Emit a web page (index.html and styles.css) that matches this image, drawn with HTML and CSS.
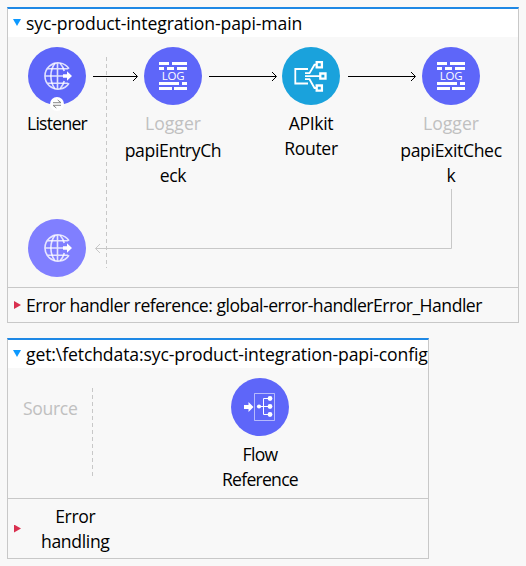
FILE: index.html
```
<!DOCTYPE html>
<html lang="en">
<head>
<meta charset="utf-8">
<title>syc-product-integration-papi</title>
<link rel="stylesheet" href="styles.css">
</head>
<body>
<svg width="0" height="0" class="defs">
  <defs>
    <symbol id="globe" viewBox="0 0 58 58">
      <g fill="none" stroke="#fff" stroke-opacity=".8" stroke-width="1.6">
        <path d="M41 21.8A13.1 13.1 0 1 0 41 36.2M29.5 15.7v26.6M19 21.8h21M19 36.2h21M16.2 29H35"/>
        <path d="M27 16.2c-5.5 7-5.5 18.6 0 25.6M32 16.2c2.3 2.5 3.7 5 4.2 7.8M32 41.8c2.3-2.5 3.7-5 4.2-7.8"/>
      </g>
      <path fill="#fff" d="M35 27.200h4v-3l5 4.800-5 4.800v-3h-4z"/>
    </symbol>
    <symbol id="log" viewBox="0 0 58 58">
      <path fill="#fff" d="M15 15h10v3H15zM28 15h15v3H28zM15 20h5v3h-5zM23 20h7v3h-7zM33 20h10v3H33zM15 35h20v3H15zM38 35h5v3h-5zM15 40h13v3H15zM30 40h13v3H30z"/>
      <text x="29" y="33" class="log-text" text-anchor="middle">LOG</text>
    </symbol>
    <symbol id="router" viewBox="0 0 58 58">
      <g fill="none" stroke="#fff" stroke-width="1.8">
        <path d="M26 22H13.300v14.500H26M23 26.200h4.500l5-8.500h2M23 29.200h15M23 32.200h4.500l5 8.800h2"/>
        <path stroke-width="2.300" d="M34.700 15.200h5.200v5.200h-5.200zM38.300 26.500h5.200v5.200h-5.200zM34.700 38.500h5.200v5.200h-5.200z"/>
      </g>
    </symbol>
    <symbol id="flowref" viewBox="0 0 58 58">
      <path fill="none" stroke="#fff" stroke-opacity=".55" d="M23.500 15.500h20v27h-20z"/>
      <path fill="none" stroke="#fff" d="M39 20.500h-6.500v16H39M28 28.500h11"/>
      <g fill="#fff"><circle cx="28" cy="28.500" r="2.100"/><circle cx="39" cy="20.500" r="2.400"/><circle cx="39" cy="28.500" r="2.400"/><circle cx="39" cy="36.500" r="2.400"/>
      <path d="M13 27h4.500v-3l5 5-5 5v-3H13z"/></g>
    </symbol>
  </defs>
</svg>

<section class="flow main">
  <header class="bar"><i class="caret down"></i><h2>syc-product-integration-papi-main</h2></header>
  <div class="stage">
    <svg class="wires" width="510" height="250" fill="none">
      <path class="divider" d="M98.500 20v211"/>
      <g stroke="#000">
        <path d="M85 39.500h44M201 39.500h67M340 39.500h67"/>
        <path d="M125 35l4.500 4.500-4.500 4.500M264 35l4.500 4.500-4.500 4.500M403 35l4.500 4.500-4.500 4.500"/>
      </g>
      <path stroke="#c8c8c8" d="M443.500 152v59.500H87.500M92 207l-4.500 4.500 4.500 4.500"/>
    </svg>
    <div class="node">
      <div class="disc"><svg width="58" height="58"><use href="#globe"/></svg>
        <svg class="badge" width="14" height="14"><circle cx="7" cy="7" r="7" fill="#fff"/><path d="M3 5.700h8L7.700 3M11 8.300H3L6.300 11" fill="none" stroke="#888" stroke-width="1"/></svg>
      </div>
      <p class="name tight">Listener</p>
      <div class="disc response"><svg width="58" height="58"><use href="#globe"/></svg></div>
    </div>
    <div class="node">
      <div class="disc"><svg width="58" height="58"><use href="#log"/></svg></div>
      <p class="name kind">Logger</p>
      <p class="label">papiEntryCh<br>eck</p>
    </div>
    <div class="node">
      <div class="disc teal"><svg width="58" height="58"><use href="#router"/></svg></div>
      <p class="name">APIkit<br>Router</p>
    </div>
    <div class="node">
      <div class="disc"><svg width="58" height="58"><use href="#log"/></svg></div>
      <p class="name kind">Logger</p>
      <p class="label">papiExitChec<br>k</p>
    </div>
  </div>
  <footer class="errors"><i class="caret right"></i><p class="reference">Error handler reference: global-error-handlerError_Handler</p></footer>
</section>

<section class="flow fetch">
  <header class="bar"><i class="caret down"></i><h2>get:\fetchdata:syc-product-integration-papi-config</h2></header>
  <div class="stage">
    <svg class="wires" width="420" height="130" fill="none"><path class="divider" d="M84.500 20v91"/></svg>
    <p class="source">Source</p>
    <div class="node">
      <div class="disc"><svg width="58" height="58"><use href="#flowref"/></svg></div>
      <p class="name tight">Flow<br>Reference</p>
    </div>
  </div>
  <footer class="errors"><i class="caret right"></i><p class="handling">Error<br>handling</p></footer>
</section>
</body>
</html>
```
FILE: styles.css
```
* { box-sizing: border-box; }
body {
  margin: 0;
  padding: 7px;
  height: 566px;
  overflow: hidden;
  background: #f8f8f8;
  color: #000;
  font: 17.6px/25px "Open Sans", "Noto Sans", sans-serif;
  letter-spacing: -0.35px;
}
h2, p { margin: 0; font-size: inherit; font-weight: 400; white-space: nowrap; }
svg { display: block; }
.defs { position: absolute; }
.flow { border: 1px solid #c8c8c8; border-top: 2px solid #1e88e5; }
.main { width: 512px; height: 316px; }
.fetch { width: 422px; height: 221px; margin-top: 15px; }
.bar { display: flex; height: 28px; padding-left: 5px; background: #fff; }
.bar h2 { margin-left: 5px; padding-top: 2px; letter-spacing: -0.12px; }
.caret { flex: none; width: 8px; height: 7px; }
.down { margin-top: 10px; background: #0d99ff; clip-path: polygon(0 0, 100% 0, 50% 100%); }
.right { width: 7px; height: 8px; background: #d9304f; clip-path: polygon(0 0, 100% 50%, 0 100%); }
.stage { position: relative; display: grid; }
.main .stage { height: 250px; grid-template-columns: 98px 134px 142px 138px; }
.fetch .stage { height: 130px; grid-template-columns: 84px 336px; }
.wires { position: absolute; left: 0; top: 0; }
.divider { stroke: #c8c8c8; stroke-dasharray: 4 3; }
.node { display: flex; flex-direction: column; align-items: center; padding-top: 10px; text-align: center; }
.disc { position: relative; flex: none; width: 58px; height: 58px; border-radius: 50%; background: #5e66f9; }
.teal { background: #1aa2dc; }
.response { margin-top: 83px; background: #807fff; }
.badge { position: absolute; left: 22px; top: 50px; }
.log-text { fill: #fff; font: 11.5px "Open Sans", sans-serif; letter-spacing: -0.3px; }
.name { margin-top: 6px; }
.tight { letter-spacing: -0.75px; }
.kind { letter-spacing: 0; }
.kind, .source { color: #c0c0c0; }
.label { margin-top: 2px; }
.source { padding: 28px 0 0 15px; }
.errors { display: flex; align-items: center; padding-left: 6px; border-top: 1px solid #c8c8c8; }
.main .errors { height: 35px; }
.fetch .errors { height: 60px; }
.errors p { margin-left: 5px; }
.errors .reference { letter-spacing: -0.5px; padding-top: 1px; }
.errors .handling { margin-left: 20px; padding-top: 1px; text-align: center; }
```
